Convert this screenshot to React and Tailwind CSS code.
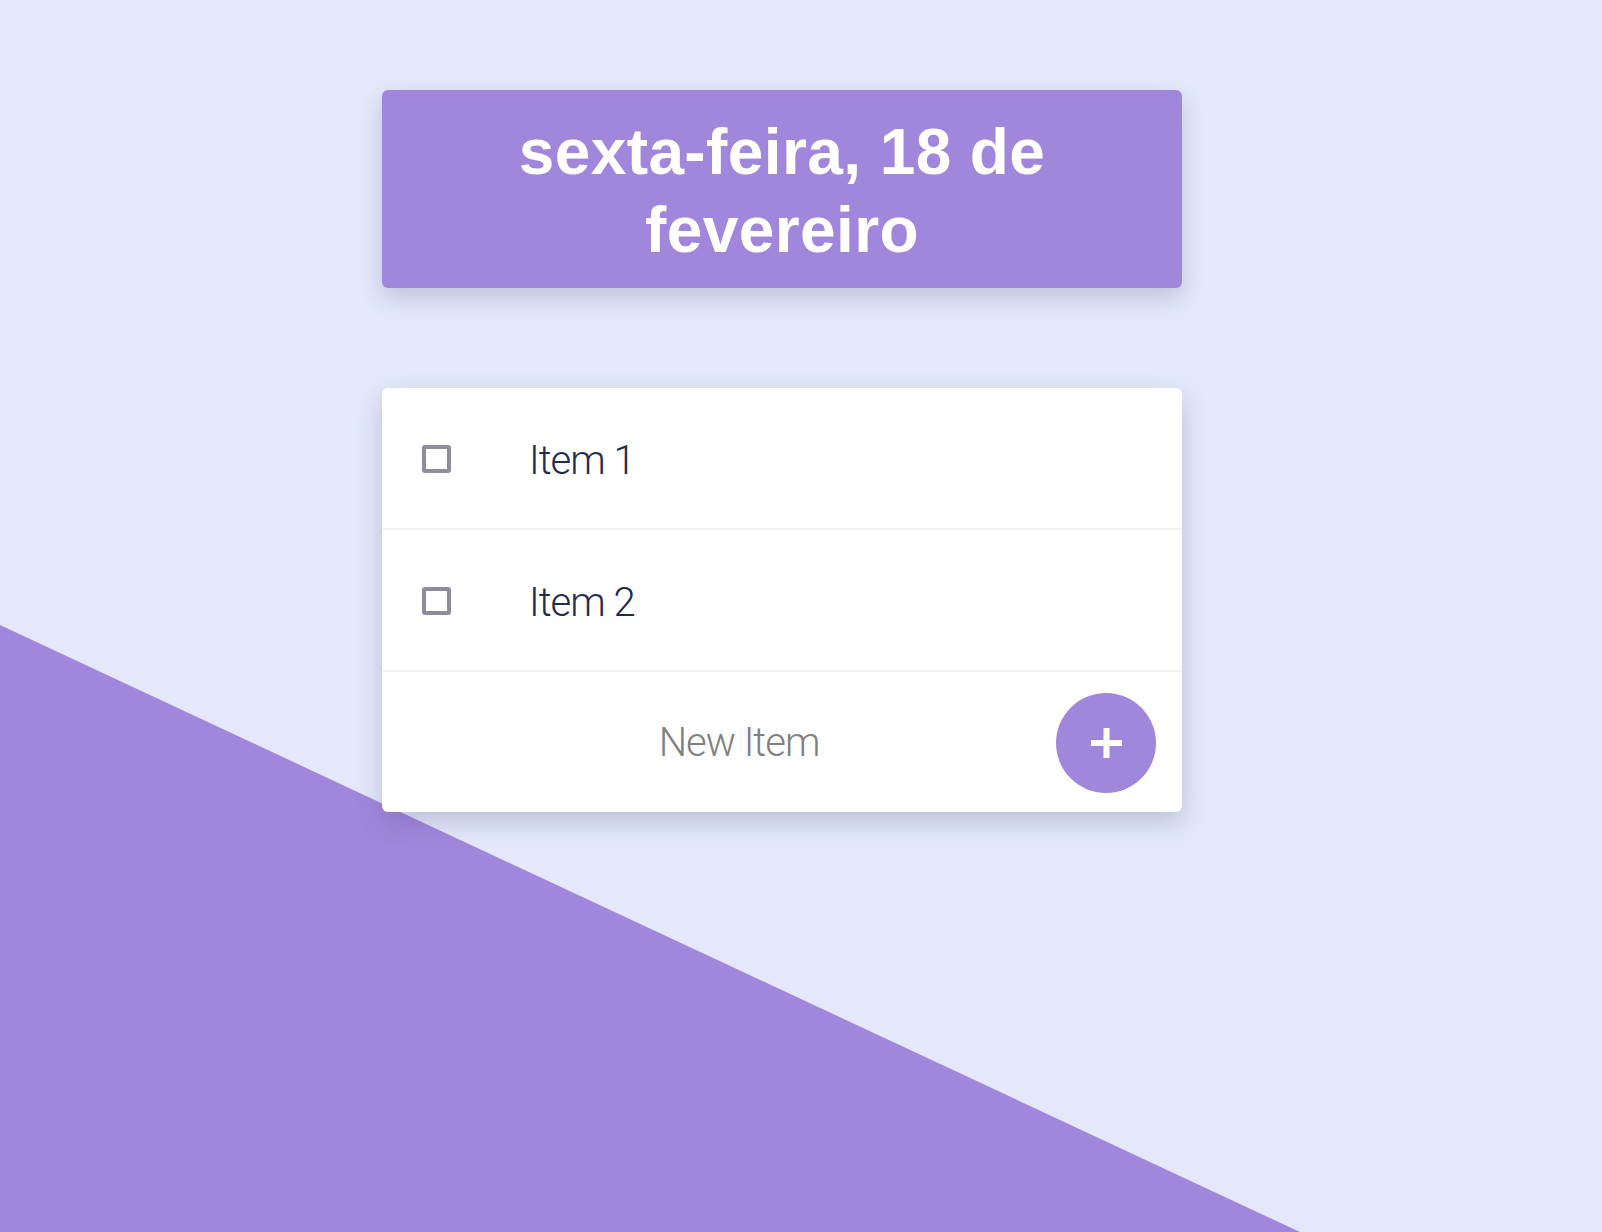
import React from "react";

const items = [
    { id: 1, label: "Item 1" },
    { id: 2, label: "Item 2" },
];

const PlusIcon = () => (
    <svg width="31" height="30" viewBox="0 0 31 30">
        <line x1="15.5" y1="0" x2="15.5" y2="30" stroke="#fff" strokeWidth="6" />
        <line x1="0" y1="15" x2="31" y2="15" stroke="#fff" strokeWidth="6" />
    </svg>
);

const App = () => {
    return (
        <div className="relative min-h-screen h-[1232px] overflow-hidden bg-[#e4e8fa] font-['Liberation_Sans',Arial,sans-serif]">
            {/* Background wedge */}

            <div className="absolute inset-0 bg-[#a187db] [clip-path:polygon(0_625px,1300px_100%,0_100%)]" />

            <div className="relative z-10 flex flex-col items-center pr-[38px] pt-[90px]">
                {/* Date header */}

                <div className="w-[800px] rounded-[6px] bg-[#a187db] px-[40px] pt-[23px] pb-[19px] text-center text-[64px] font-bold leading-[78px] tracking-[0.4px] text-white shadow-[0_10px_22px_rgba(70,70,120,0.22)]">
                    <h1>sexta-feira, 18 de fevereiro</h1>
                </div>

                {/* Todo list */}

                <div className="mt-[100px] w-[800px] overflow-hidden rounded-[6px] bg-white shadow-[0_10px_24px_rgba(70,70,120,0.25)]">
                    {items.map((item) => (
                        <div
                            key={item.id}
                            className="flex h-[142px] items-center border-b-2 border-[#f0f0f0] pt-[2px]"
                        >
                            <span className="ml-[40px] h-[28px] w-[29px] rounded-[3px] border-[4px] border-[#8e8d9b]" />

                            <span className="ml-[78px] mt-[4px] font-['Roboto',sans-serif] text-[40px] font-light tracking-[-1px] text-[#1e2c52]">
                                {item.label}
                            </span>
                        </div>
                    ))}

                    <div className="flex h-[140px] items-center pt-[2px]">
                        <input
                            type="text"
                            placeholder="New Item"
                            className="ml-[40px] min-w-0 flex-1 bg-transparent text-center font-['Roboto',sans-serif] text-[40px] font-light tracking-[-1px] text-[#1e2c52] outline-none placeholder:text-[#808080]"
                        />

                        <button className="mr-[26px] flex h-[100px] w-[100px] items-center justify-center rounded-full bg-[#a187db]">
                            <PlusIcon />
                        </button>
                    </div>
                </div>
            </div>
        </div>
    );
};

export default App;
